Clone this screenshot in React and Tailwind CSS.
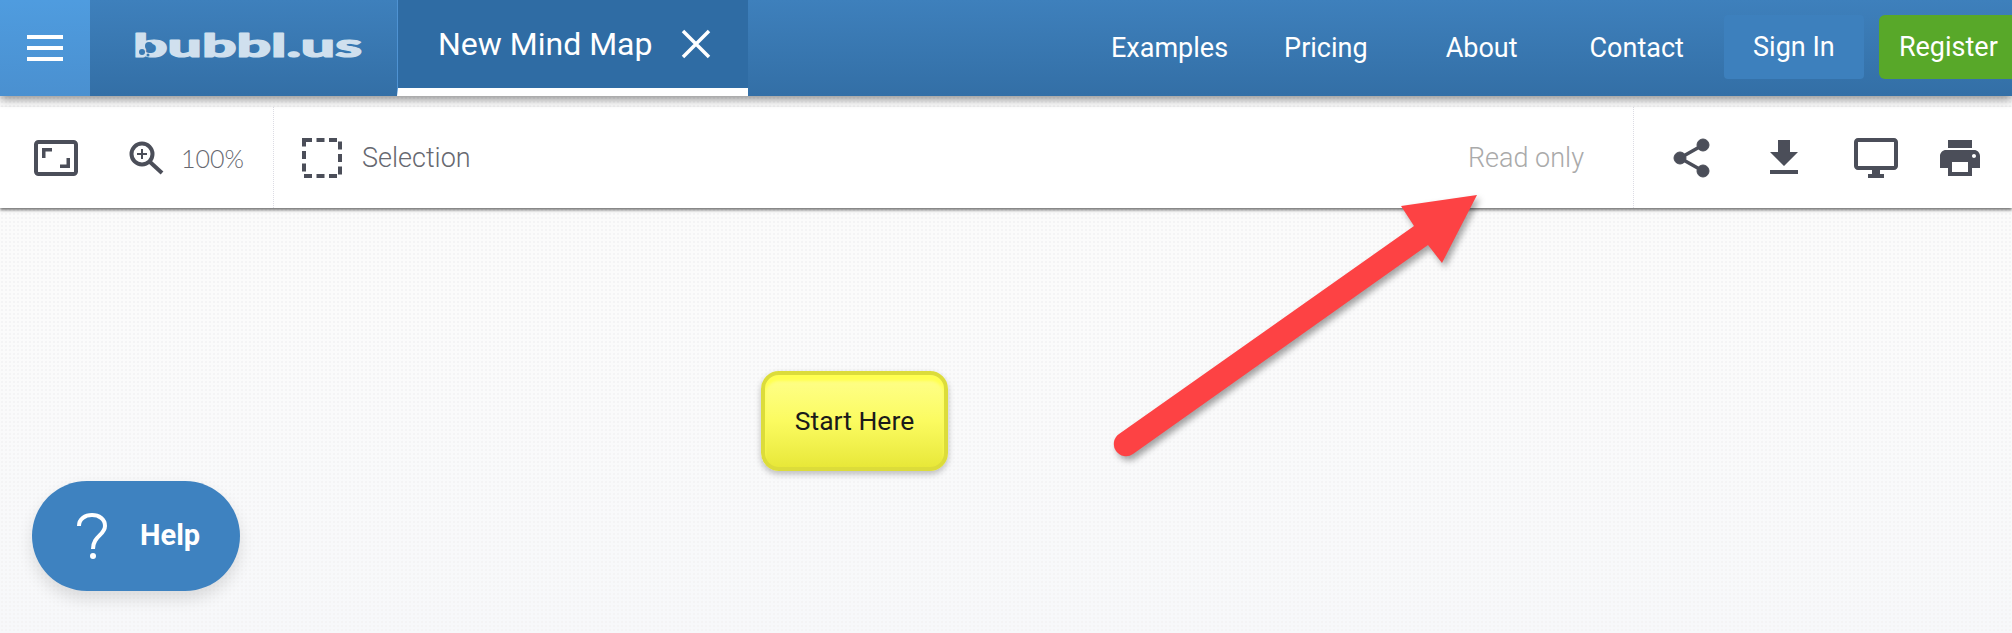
import React from 'react'

const iconPaths = {
  download: 'M19 9h-4V3H9v6H5l7 7 7-7zM5 18v2h14v-2H5z',
  desktop: 'M21 2H3c-1.1 0-2 .9-2 2v12c0 1.1.9 2 2 2h7v2H8v2h8v-2h-2v-2h7c1.1 0 2-.9 2-2V4c0-1.1-.9-2-2-2zm0 14H3V4h18v12z',
  print: 'M19 8H5c-1.66 0-3 1.34-3 3v6h4v4h12v-4h4v-6c0-1.66-1.34-3-3-3zm-3 11H8v-5h8v5zm3-7c-.55 0-1-.45-1-1s.45-1 1-1 1 .45 1 1-.45 1-1 1zm-1-9H6v4h12V3z',
}

function MaterialIcon({ name, className }) {
  return (
    <svg viewBox="0 0 24 24" className={className} fill="#4b4e59">
      <path d={iconPaths[name]} />
    </svg>
  )
}

export default function App() {
  return (
    <div className="relative h-[633px] w-[2012px] overflow-hidden bg-gradient-to-b from-[#fbfbfb] via-[#fbfbfb] to-[#f7f8fa] font-['Roboto',sans-serif]">
      {/* Canvas dots */}
      <div className="absolute inset-0 bg-[radial-gradient(#f4f4f5_1px,transparent_1px)] bg-[length:4px_4px]" />

      {/* Top bar */}
      <header className="relative z-20 flex h-[96px] bg-gradient-to-b from-[#3e80bc] to-[#336fa6] text-white shadow-[0_3px_9px_rgba(0,0,0,0.45)]">
        <div className="flex w-[90px] items-center justify-center bg-gradient-to-b from-[#4f9cdf] to-[#4a90d0]">
          <div className="flex w-[36px] flex-col gap-[7px]">
            <span className="h-[4px] bg-white" />
            <span className="h-[4px] bg-white" />
            <span className="h-[4px] bg-white" />
          </div>
        </div>
        <div className="w-[307px]">
          <svg viewBox="90 0 307 96" className="h-[96px] w-[307px]">
            <text
              x="133"
              y="57"
              textLength="229"
              lengthAdjust="spacingAndGlyphs"
              fontFamily="Lato, sans-serif"
              fontWeight="900"
              fontSize="32"
              fill="#d0e0ee"
              stroke="#d0e0ee"
              strokeWidth="1.2"
              strokeLinejoin="round"
            >
              bubbl.us
            </text>
            <circle cx="149" cy="46" r="4" fill="#3a7ab3" />
            <circle cx="142" cy="52" r="3" fill="#3a7ab3" />
            <circle cx="148" cy="55" r="1.5" fill="#3a7ab3" />
          </svg>
        </div>
        <div className="flex w-[351px] items-center border-l border-[#4f93d3] border-b-[8px] border-b-white bg-[#2f6ca4] pl-[40px]">
          <span className="text-[32px] leading-none">New Mind Map</span>
          <svg viewBox="0 0 30 30" className="ml-[29px] h-[30px] w-[30px]" stroke="white" strokeWidth="3.5">
            <path d="M2 2 28 28M28 2 2 28" />
          </svg>
        </div>
        <nav className="flex flex-1 items-center text-[27px]">
          <a className="ml-[363px]">Examples</a>
          <a className="ml-[56px]">Pricing</a>
          <a className="ml-[78px]">About</a>
          <a className="ml-[72px]">Contact</a>
          <a className="mb-[2px] ml-[40px] flex h-[64px] w-[140px] items-center justify-center rounded-[4px] bg-[#3d80bd]">Sign In</a>
          <a className="mb-[2px] ml-[15px] flex h-[64px] flex-1 items-center rounded-l-[6px] bg-[#58a829] pl-[20px]">Register</a>
        </nav>
      </header>

      {/* Toolbar */}
      <div className="relative z-10 mt-[11px] flex h-[101px] items-center bg-white pr-[28px] shadow-[0_2px_3px_rgba(0,0,0,0.55)]">
        <svg viewBox="0 0 44 36" className="ml-[34px] h-[36px] w-[44px]" fill="none">
          <rect x="2" y="2" width="40" height="32" rx="2.5" stroke="#4b4e59" strokeWidth="4" />
          <path d="M8 18V8h10v3.5h-6.5V18zM36 18v10H26v-3.5h6.5V18z" fill="#4b4e59" />
        </svg>
        <svg viewBox="0 0 35 34" className="ml-[51px] h-[34px] w-[35px]" fill="none" stroke="#4b4e59">
          <circle cx="13" cy="13" r="10.5" strokeWidth="4" />
          <path d="M21 21 33 32" strokeWidth="4" />
          <path d="M13 8v10M8 13h10" strokeWidth="2" />
        </svg>
        <span className="ml-[17px] pt-[2px] font-['Lato',sans-serif] text-[25px] font-light text-[#666870]">100%</span>
        <div className="ml-[29px] h-full border-l border-dotted border-[#dcdce4]" />
        <svg viewBox="0 0 40 40" className="ml-[28px] h-[40px] w-[40px]" fill="none" stroke="#4b4e59" strokeWidth="4">
          <rect x="2" y="2" width="36" height="36" strokeDasharray="8 4.5" />
        </svg>
        <span className="ml-[20px] pt-[2px] text-[27px] font-light text-[#666870]">Selection</span>
        <span className="ml-auto pt-[2px] text-[27px] font-light text-[#aaaaaa]">Read only</span>
        <div className="ml-[49px] h-full border-l border-dotted border-[#dcdce4]" />
        <svg viewBox="0 0 37 40" className="ml-[39px] h-[40px] w-[37px]" fill="#4b4e59" stroke="#4b4e59">
          <path d="M30 7 7 20l23 13" fill="none" strokeWidth="3.5" />
          <circle cx="30" cy="7" r="6" />
          <circle cx="7" cy="20" r="6" />
          <circle cx="30" cy="33" r="6" />
        </svg>
        <MaterialIcon name="download" className="ml-[50px] h-[48px] w-[48px]" />
        <MaterialIcon name="desktop" className="ml-[44px] h-[48px] w-[48px]" />
        <MaterialIcon name="print" className="ml-[36px] h-[48px] w-[48px]" />
      </div>

      {/* Start node */}
      <div className="absolute top-[371px] left-[761px] flex h-[100px] w-[187px] items-center justify-center rounded-[18px] border-[4px] border-[#dcdc3a] bg-gradient-to-b from-[#ffff8a] via-[#fbfb60] to-[#e8e838] text-[26.5px] text-[#1a1a1a] shadow-[0_3px_6px_rgba(0,0,0,0.25),inset_0_6px_3px_#ffff50]">
        Start Here
      </div>

      {/* Help */}
      <div className="absolute top-[481px] left-[32px] flex h-[110px] w-[208px] items-center rounded-[55px] bg-[#3e82c0] pl-[44px] text-white shadow-[0_8px_16px_rgba(0,0,0,0.12)]">
        <svg viewBox="0 0 32 46" className="h-[46px] w-[32px]" fill="none" stroke="white" strokeWidth="4">
          <path d="M3 13C3 6 9 2 16 2s13 4 13 11c0 9-12 10-12 23" />
          <circle cx="17" cy="43" r="3" fill="white" stroke="none" />
        </svg>
        <span className="ml-[32px] text-[29px] font-bold">Help</span>
      </div>

      {/* Red arrow */}
      <svg viewBox="0 0 2012 633" className="pointer-events-none absolute inset-0 z-30 h-[633px] w-[2012px] drop-shadow-[3px_4px_3px_rgba(0,0,0,0.35)]">
        <path d="M1477 195 1401 206 1414 226 1119 434a12 12 0 0 0 14 20L1428 245 1442 263Z" fill="#fd4244" />
      </svg>
    </div>
  )
}
